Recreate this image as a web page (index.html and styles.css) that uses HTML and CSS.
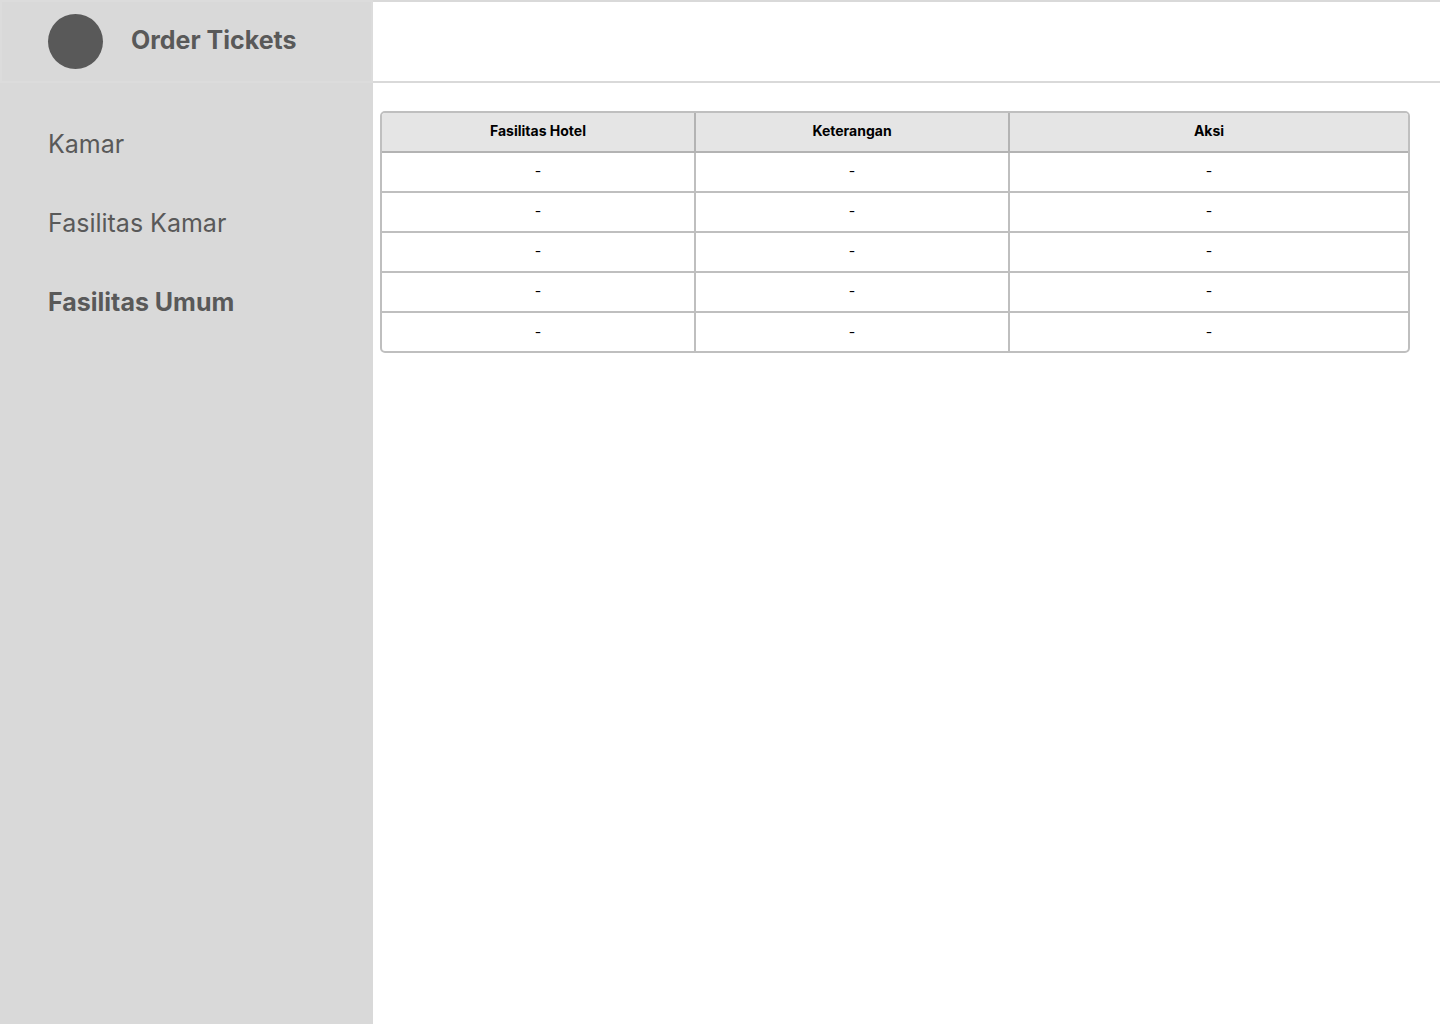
FILE: index.html
```html
<!DOCTYPE html>
<html lang="id">
<head>
<meta charset="utf-8">
<meta name="viewport" content="width=device-width, initial-scale=1">
<title>Order Tickets</title>
<link rel="stylesheet" href="styles.css">
</head>
<body>
<div class="layout">
  <aside class="sidebar">
    <div class="brand">
      <span class="brand-logo"></span>
      <span class="brand-name">Order Tickets</span>
    </div>
    <nav class="menu">
      <a class="menu-link" href="#">Kamar</a>
      <a class="menu-link" href="#">Fasilitas Kamar</a>
      <a class="menu-link menu-link-active" href="#">Fasilitas Umum</a>
    </nav>
  </aside>
  <div class="page">
    <header class="topbar"></header>
    <main class="content">
      <table class="facilities">
        <colgroup><col class="col-name"><col class="col-note"><col></colgroup>
        <thead>
          <tr><th>Fasilitas Hotel</th><th>Keterangan</th><th>Aksi</th></tr>
        </thead>
        <tbody>
          <tr><td>-</td><td>-</td><td>-</td></tr>
          <tr><td>-</td><td>-</td><td>-</td></tr>
          <tr><td>-</td><td>-</td><td>-</td></tr>
          <tr><td>-</td><td>-</td><td>-</td></tr>
          <tr><td>-</td><td>-</td><td>-</td></tr>
        </tbody>
      </table>
    </main>
  </div>
</div>
</body>
</html>
```
FILE: styles.css
```css
* {
  box-sizing: border-box;
}

body {
  margin: 0;
  font-family: Inter, sans-serif;
  color: #000;
  background: #fff;
}

.layout {
  display: flex;
  min-height: 100vh;
}

.sidebar {
  flex: 0 0 373px;
  background: #d9d9d9;
  color: #595959;
  font-size: 25px;
  line-height: 32px;
}

.brand {
  display: flex;
  align-items: center;
  gap: 28px;
  height: 83px;
  padding: 0 46px;
  border: 2px solid #dcdcdc;
}

.brand-logo {
  width: 55px;
  height: 55px;
  border-radius: 50%;
  background: #595959;
}

.brand-name {
  padding-bottom: 4px;
  font-weight: 700;
}

.menu {
  display: flex;
  flex-direction: column;
  align-items: flex-start;
  gap: 47px;
  padding: 45px 48px;
}

.menu-link {
  color: inherit;
  text-decoration: none;
}

.menu-link-active {
  font-weight: 700;
}

.page {
  flex: 1;
  min-width: 0;
}

.topbar {
  height: 83px;
  border: solid #d9d9d9;
  border-width: 2px 0;
}

.content {
  padding: 28px 30px 28px 7px;
}

.facilities {
  width: 100%;
  table-layout: fixed;
  border: 2px solid #bfbfbf;
  border-radius: 5px;
  border-spacing: 0;
  overflow: hidden;
  font-size: 14px;
  line-height: 17px;
}

.col-name,
.col-note {
  width: 314px;
}

.facilities th,
.facilities td {
  height: 40px;
  padding: 0 0 4px;
  border-right: 2px solid #bfbfbf;
  border-bottom: 2px solid #bfbfbf;
  text-align: center;
}

.facilities th {
  background: #e5e5e5;
  border-color: #b3b3b3;
  font-weight: 700;
}

.facilities th:last-child,
.facilities td:last-child {
  border-right: 0;
}

.facilities tbody tr:last-child td {
  height: 38px;
  padding-bottom: 2px;
  border-bottom: 0;
}
```
